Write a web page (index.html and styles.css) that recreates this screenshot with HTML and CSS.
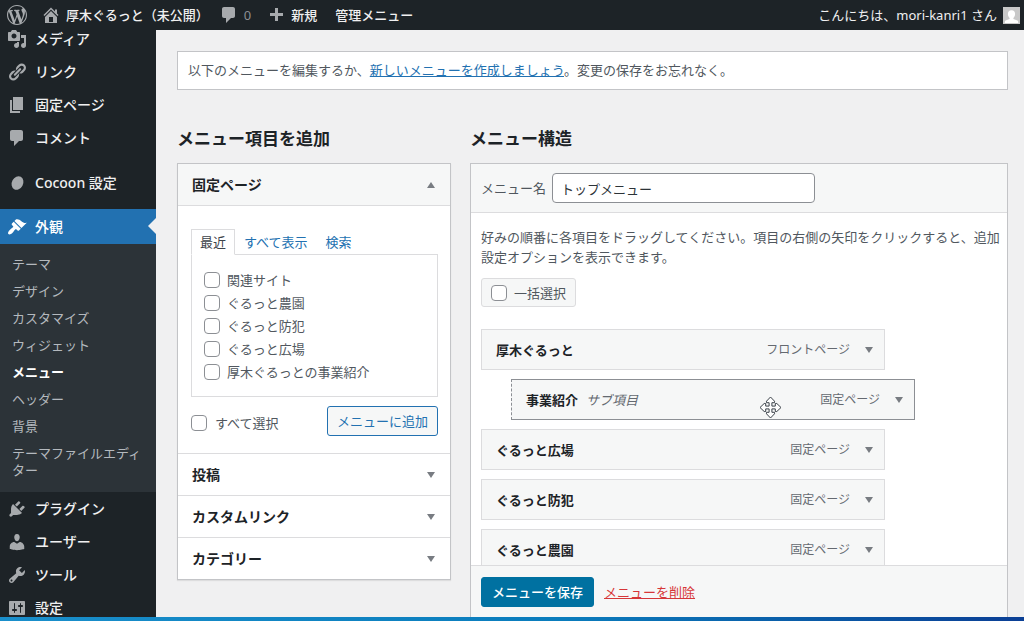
FILE: index.html
```html
<!DOCTYPE html>
<html lang="ja">
<head>
<meta charset="utf-8">
<meta name="viewport" content="width=device-width, initial-scale=1">
<title>メニュー</title>
<link rel="stylesheet" href="styles.css">
</head>
<body class="app">
<header class="adminbar">
  <a class="bar-logo" href="#" aria-label="WordPress"><svg class="icon" viewBox="0 0 20 20"><path d="M20 10c0-5.51-4.49-10-10-10C4.48 0 0 4.49 0 10c0 5.52 4.48 10 10 10 5.51 0 10-4.48 10-10zM7.78 15.37L4.37 6.22c.55-.02 1.17-.08 1.17-.08.5-.06.44-1.13-.06-1.11 0 0-1.45.11-2.37.11-.18 0-.37 0-.58-.01C4.12 2.69 6.87 1.11 10 1.11c2.33 0 4.45.87 6.05 2.34-.68-.11-1.65.39-1.65 1.58 0 .74.45 1.36.9 2.1.35.61.55 1.36.55 2.46 0 1.49-1.4 5-1.4 5l-3.03-8.37c.54-.02.82-.17.82-.17.5-.05.44-1.25-.06-1.22 0 0-1.44.12-2.38.12-.87 0-2.33-.12-2.33-.12-.5-.03-.56 1.2-.06 1.22l.92.08 1.26 3.41zM17.41 10c.24-.64.74-1.87.43-4.25.7 1.29 1.05 2.71 1.05 4.25 0 3.29-1.73 6.24-4.4 7.78.97-2.59 1.94-5.2 2.92-7.78zM6.1 18.09C3.12 16.65 1.11 13.53 1.11 10c0-1.3.23-2.48.72-3.59C3.25 10.3 4.67 14.2 6.1 18.09zm4.03-6.63l2.58 6.98c-.86.29-1.76.45-2.71.45-.79 0-1.57-.11-2.29-.33.81-2.38 1.62-4.74 2.42-7.1z"/></svg></a>
  <a class="bar-item bar-site" href="#"><svg class="icon" viewBox="0 0 20 20"><path d="M16 8.5l1.53 1.53-1.06 1.06L10 4.6l-6.47 6.49-1.06-1.06L10 2.5l4 4v-2h2v4zm-6-2.46l6 5.99V18H4v-5.97zM12 17v-5H8v5h4z"/></svg><span>厚木ぐるっと（未公開）</span></a>
  <a class="bar-item bar-comments" href="#"><svg class="icon" viewBox="0 0 20 20"><path d="M5 2h9c1.1 0 2 .9 2 2v7c0 1.1-.9 2-2 2h-2l-5 5v-5H5c-1.1 0-2-.9-2-2V4c0-1.1.9-2 2-2z"/></svg><span class="count">0</span></a>
  <a class="bar-item bar-new" href="#"><svg class="icon" viewBox="0 0 20 20"><path d="M17 8v3h-5v5H9v-5H4V8h5V3h3v5h5z"/></svg><span>新規</span></a>
  <a class="bar-item" href="#">管理メニュー</a>
  <a class="bar-item bar-user" href="#"><span>こんにちは、mori-kanri1 さん</span><svg class="avatar" viewBox="0 0 16 16"><path fill="#c8c8c8" d="M0 0h16v16H0z"/><path fill="#fff" d="M8 3c2.200 0 3.400 1.600 3.400 3.600 0 1.700-.8 3-1.600 3.700v.9l3.700 1.500c.5.200.8.700.8 1.300v1H1.700v-1c0-.6.300-1.100.8-1.300l3.700-1.500v-.9C5.400 9.600 4.600 8.300 4.600 6.600 4.600 4.600 5.800 3 8 3z"/></svg></a>
</header>
<div class="body">
  <nav class="sidebar" aria-label="管理メニュー">
    <ul class="nav">
      <li><a class="nav-link" href="#"><svg class="icon" viewBox="0 0 20 20"><path d="M13 11V4c0-.55-.45-1-1-1h-1.670L9 1H5L3.670 3H2c-.55 0-1 .45-1 1v7c0 .55.45 1 1 1h10c.55 0 1-.45 1-1zM7 4.500c1.380 0 2.500 1.120 2.500 2.500S8.380 9.500 7 9.500 4.500 8.380 4.500 7 5.620 4.500 7 4.500zM14 6h5v10.500c0 1.380-1.120 2.500-2.500 2.500S14 17.880 14 16.500s1.120-2.500 2.500-2.500c.17 0 .34.02.5.05V9h-3V6zm-4 8.050V13h2v3.500c0 1.380-1.120 2.500-2.500 2.500S7 17.880 7 16.500 8.120 14 9.500 14c.17 0 .34.02.5.05z"/></svg>メディア</a></li>
      <li><a class="nav-link" href="#"><svg class="icon" viewBox="0 0 20 20"><path d="M17.740 2.760c1.680 1.690 1.680 4.410 0 6.100l-1.530 1.520c-1.120 1.120-2.700 1.470-4.140 1.090l2.620-2.610.76-.77.76-.76c.84-.84.84-2.200 0-3.040-.84-.85-2.200-.85-3.040 0l-.77.76-3.380 3.380c-.37-1.440-.02-3.020 1.100-4.140l1.520-1.530c1.690-1.680 4.420-1.680 6.100 0zM8.590 13.430l5.340-5.340c.42-.42.42-1.100 0-1.520-.44-.43-1.130-.39-1.530 0l-5.330 5.340c-.42.42-.42 1.100 0 1.520.44.43 1.130.39 1.520 0zm-.76 2.290l4.140-4.150c.38 1.440.03 3.020-1.090 4.140l-1.520 1.530c-1.690 1.680-4.410 1.680-6.100 0-1.680-1.680-1.680-4.420 0-6.100l1.530-1.520c1.120-1.120 2.700-1.470 4.140-1.100l-4.140 4.150c-.85.84-.85 2.200 0 3.050.84.84 2.200.84 3.040 0z"/></svg>リンク</a></li>
      <li><a class="nav-link" href="#"><svg class="icon" viewBox="0 0 20 20"><path d="M6 15V2h10v13H6zm-1 1h8v2H3V5h2v11z"/></svg>固定ページ</a></li>
      <li><a class="nav-link" href="#"><svg class="icon" viewBox="0 0 20 20"><path d="M5 2h9c1.100 0 2 .9 2 2v7c0 1.100-.9 2-2 2h-2l-5 5v-5H5c-1.100 0-2-.9-2-2V4c0-1.100.9-2 2-2z"/></svg>コメント</a></li>
      <li class="nav-cocoon"><a class="nav-link" href="#"><svg class="icon" viewBox="0 0 20 20"><ellipse cx="10.500" cy="10" rx="5.600" ry="7" transform="rotate(28 10.500 10)"/></svg>Cocoon 設定</a></li>
      <li>
        <a class="nav-link nav-current" href="#"><svg class="icon" viewBox="0 0 20 20"><path d="M14.480 11.060L7.410 3.990l1.500-1.500c.5-.56 2.300-.47 3.510.32 1.210.8 1.430 1.280 2.910 2.100 1.180.64 2.450 1.260 4.450.85zm-.71.71L6.700 4.700 4.930 6.470c-.39.39-.39 1.020 0 1.410l1.060 1.060c.39.39.39 1.030 0 1.420-.6.6-1.430 1.110-2.210 1.690-.35.26-.7.53-1.010.84C1.430 14.230.4 16.080 1.400 17.070c.99 1 2.840-.03 4.180-1.360.31-.31.58-.66.85-1.020.57-.78 1.080-1.610 1.690-2.210.39-.39 1.020-.39 1.410 0l1.060 1.060c.39.39 1.020.39 1.410 0z"/></svg>外観</a>
        <ul class="subnav">
          <li><a href="#">テーマ</a></li>
          <li><a href="#">デザイン</a></li>
          <li><a href="#">カスタマイズ</a></li>
          <li><a href="#">ウィジェット</a></li>
          <li><a class="subnav-current" href="#" aria-current="page">メニュー</a></li>
          <li><a href="#">ヘッダー</a></li>
          <li><a href="#">背景</a></li>
          <li><a href="#">テーマファイルエディター</a></li>
        </ul>
      </li>
      <li><a class="nav-link" href="#"><svg class="icon" viewBox="0 0 20 20"><path d="M13.110 4.360L9.870 7.600 8 5.730l3.240-3.240c.35-.34 1.050-.2 1.560.32.52.51.66 1.210.31 1.550zm-8 1.770l.91-1.120 9.010 9.010-1.190.84c-.71.71-2.630 1.160-3.820 1.160H6.140L4.900 17.260c-.59.59-1.540.59-2.120 0-.59-.58-.59-1.530 0-2.120l1.240-1.240v-3.880c0-1.130.4-3.190 1.090-3.890zm7.260 3.970l3.240-3.240c.34-.35 1.040-.21 1.550.31.52.51.66 1.210.31 1.550l-3.240 3.250z"/></svg>プラグイン</a></li>
      <li><a class="nav-link" href="#"><svg class="icon" viewBox="0 0 20 20"><path d="M10 9.250c-2.270 0-2.730-3.440-2.730-3.440C7 4.020 7.820 2 9.970 2c2.160 0 2.980 2.020 2.710 3.810 0 0-.41 3.440-2.680 3.440zm0 2.570L12.720 10c2.390 0 4.520 2.330 4.520 4.530v2.490s-3.650 1.130-7.240 1.130c-3.650 0-7.240-1.130-7.240-1.130v-2.490c0-2.250 1.940-4.480 4.470-4.480z"/></svg>ユーザー</a></li>
      <li><a class="nav-link" href="#"><svg class="icon" viewBox="0 0 20 20"><path d="M16.680 9.770c-1.340 1.340-3.300 1.670-4.950.99l-5.410 6.520c-.99.99-2.590.99-3.580 0s-.99-2.590 0-3.570l6.520-5.420c-.68-1.650-.35-3.610.99-4.950 1.280-1.280 3.120-1.620 4.720-1.060l-2.890 2.890 2.820 2.820 2.860-2.870c.53 1.580.18 3.390-1.080 4.650zM3.810 16.210c.4.39 1.040.39 1.430 0 .4-.4.4-1.040 0-1.430-.39-.4-1.030-.4-1.430 0-.39.39-.39 1.030 0 1.430z"/></svg>ツール</a></li>
      <li><a class="nav-link" href="#"><svg class="icon" viewBox="0 0 20 20"><path d="M18 16V4c0-.55-.45-1-1-1H3c-.55 0-1 .45-1 1v12c0 .55.45 1 1 1h14c.55 0 1-.45 1-1zM8 11h1c.55 0 1 .45 1 1s-.45 1-1 1H8v1.500c0 .28-.22.5-.5.5s-.5-.22-.5-.5V13H6c-.55 0-1-.45-1-1s.45-1 1-1h1V5.500c0-.28.22-.5.5-.5s.5.22.5.5V11zm5-2h-1c-.55 0-1-.45-1-1s.45-1 1-1h1V5.500c0-.28.22-.5.5-.5s.5.22.5.5V7h1c.55 0 1 .45 1 1s-.45 1-1 1h-1v5.500c0 .28-.22.5-.5.5s-.5-.22-.5-.5V9z"/></svg>設定</a></li>
    </ul>
  </nav>
  <main class="main">
    <p class="notice">以下のメニューを編集するか、<a href="#">新しいメニューを作成しましょう</a>。変更の保存をお忘れなく。</p>
    <div class="columns">
      <section class="add-col">
        <h2 class="heading">メニュー項目を追加</h2>
        <div class="accordion">
          <button class="acc-head acc-open" type="button" aria-expanded="true">固定ページ<span class="arrow arrow-up"></span></button>
          <div class="acc-body">
            <div class="tabs" role="tablist">
              <button class="tab tab-active" type="button" role="tab" aria-selected="true">最近</button>
              <button class="tab" type="button" role="tab">すべて表示</button>
              <button class="tab" type="button" role="tab">検索</button>
            </div>
            <div class="tab-panel">
              <label class="check"><input type="checkbox">関連サイト</label>
              <label class="check"><input type="checkbox">ぐるっと農園</label>
              <label class="check"><input type="checkbox">ぐるっと防犯</label>
              <label class="check"><input type="checkbox">ぐるっと広場</label>
              <label class="check"><input type="checkbox">厚木ぐるっとの事業紹介</label>
            </div>
            <div class="add-row">
              <label class="check check-all"><input type="checkbox">すべて選択</label>
              <button class="btn btn-add" type="button">メニューに追加</button>
            </div>
          </div>
          <button class="acc-head" type="button">投稿<span class="arrow"></span></button>
          <button class="acc-head" type="button">カスタムリンク<span class="arrow"></span></button>
          <button class="acc-head" type="button">カテゴリー<span class="arrow"></span></button>
        </div>
      </section>
      <section class="edit-col">
        <h2 class="heading">メニュー構造</h2>
        <form class="editor">
          <div class="editor-head">
            <label for="menu-name">メニュー名</label>
            <input class="name-input" id="menu-name" type="text" value="トップメニュー">
          </div>
          <div class="editor-body">
            <p class="help">好みの順番に各項目をドラッグしてください。項目の右側の矢印をクリックすると、追加設定オプションを表示できます。</p>
            <label class="check bulk"><input type="checkbox">一括選択</label>
            <ul class="items">
              <li class="item"><span class="item-title">厚木ぐるっと</span><span class="item-type">フロントページ</span><button class="toggle" type="button" aria-label="開く"><span class="arrow"></span></button></li>
              <li class="item item-sub"><span class="item-title">事業紹介</span><em class="item-note">サブ項目</em><span class="item-type">固定ページ</span><button class="toggle" type="button" aria-label="開く"><span class="arrow"></span></button>
                <svg class="move" viewBox="0 0 23 23"><path d="M11.500 1l4 4.200v1.500h-2.600v3.400h3.400V7.500h1.500l4.200 4-4.200 4h-1.500v-2.600h-3.400v3.400h2.600v1.500l-4 4.200-4-4.200v-1.500h2.600v-3.400H6.700v2.600H5.200l-4.200-4 4.200-4h1.500v2.600h3.400V6.700H7.500V5.200z"/></svg>
              </li>
              <li class="item"><span class="item-title">ぐるっと広場</span><span class="item-type">固定ページ</span><button class="toggle" type="button" aria-label="開く"><span class="arrow"></span></button></li>
              <li class="item"><span class="item-title">ぐるっと防犯</span><span class="item-type">固定ページ</span><button class="toggle" type="button" aria-label="開く"><span class="arrow"></span></button></li>
              <li class="item"><span class="item-title">ぐるっと農園</span><span class="item-type">固定ページ</span><button class="toggle" type="button" aria-label="開く"><span class="arrow"></span></button></li>
            </ul>
          </div>
          <div class="editor-foot">
            <button class="btn btn-save" type="button">メニューを保存</button>
            <a class="delete" href="#">メニューを削除</a>
          </div>
        </form>
      </section>
    </div>
  </main>
</div>
<div class="taskbar"></div>
</body>
</html>
```

FILE: styles.css
```css
*, *::before, *::after { box-sizing: border-box; }
ul, p, h2 { margin: 0; padding: 0; }
ul { list-style: none; }
button, input { font: inherit; color: inherit; }
a { color: #2271b1; }

.app {
  display: flex;
  flex-direction: column;
  height: 100vh;
  margin: 0;
  overflow: hidden;
  background: #f0f0f1;
  color: #50575e;
  font: 13px/20px "Noto Sans", "Noto Sans CJK JP", sans-serif;
}
.icon { flex: none; width: 20px; height: 20px; fill: #a7aaad; }

/* Admin bar */
.adminbar {
  display: flex;
  flex: none;
  align-items: center;
  height: 30px;
  padding: 0 4px 0 7px;
  background: #1d2327;
  color: #f0f0f1;
  font-weight: 500;
}
.adminbar a { color: inherit; text-decoration: none; white-space: nowrap; }
.bar-logo { display: flex; margin-right: 14px; }
.bar-item { display: flex; align-items: center; gap: 5px; }
.bar-site { margin-right: 10px; }
.bar-comments { margin-right: 15px; }
.bar-new { margin-right: 18px; }
.count { color: #8c8f94; font-weight: 400; }
.bar-user { gap: 6px; margin-left: auto; font-weight: 400; }
.avatar { width: 17px; height: 17px; }

.body { display: flex; flex: 1; min-height: 0; }

/* Sidebar */
.sidebar { flex: none; width: 156px; overflow: hidden; background: #1d2327; }
.nav { margin-top: -8px; }
.nav-link {
  display: flex;
  align-items: center;
  gap: 8px;
  height: 33px;
  padding-left: 7px;
  color: #f0f0f1;
  font-size: 14px;
  font-weight: 500;
  text-decoration: none;
}
.nav-cocoon { margin: 12px 0 10px; }
.nav-current { position: relative; height: 35px; background: #2271b1; color: #fff; }
.nav-current .icon { fill: #fff; }
.nav-current::after {
  content: "";
  position: absolute;
  top: 9px;
  right: 0;
  border: 8px solid transparent;
  border-left: 0;
  border-right-color: #f0f0f1;
}
.subnav { padding: 7px 0 8px; background: #2c3338; }
.subnav a {
  display: block;
  padding: 5px 12px;
  color: #b4b9be;
  line-height: 17px;
  text-decoration: none;
}
.subnav .subnav-current { color: #fff; font-weight: 700; }

/* Content */
.main {
  display: flex;
  flex: 1;
  flex-direction: column;
  min-width: 0;
  padding: 21px 16px 0 21px;
}
.notice {
  flex: none;
  padding: 8px 10px 9px;
  border: 1px solid #c3c4c7;
  background: #fff;
}
.columns { display: flex; flex: 1; gap: 19px; min-height: 0; margin-top: 37px; }
.add-col { flex: none; width: 274px; }
.edit-col { display: flex; flex: 1; flex-direction: column; min-width: 0; }
.heading {
  margin-bottom: 12px;
  color: #1d2327;
  font-size: 17px;
  font-weight: 700;
  line-height: 24px;
}

.arrow {
  width: 0;
  height: 0;
  border: 4px solid transparent;
  border-top: 6px solid #787c82;
  border-bottom: 0;
}
.arrow-up { border-top: 0; border-bottom: 6px solid #787c82; }

.accordion { border: 1px solid #c3c4c7; background: #fff; box-shadow: 0 1px 1px rgba(0, 0, 0, .08); }
.acc-head {
  display: flex;
  align-items: center;
  justify-content: space-between;
  width: 100%;
  height: 42px;
  padding: 0 15px 0 14px;
  border: 0;
  border-top: 1px solid #dcdcde;
  background: #fff;
  color: #1d2327;
  font-size: 14px;
  font-weight: 700;
}
.acc-open { border-top: 0; border-bottom: 1px solid #dcdcde; background: #f6f7f7; }
.acc-body { padding: 23px 12px 17px 13px; }
.tabs { display: flex; }
.tab {
  height: 26px;
  padding: 0 8px;
  border: 1px solid transparent;
  background: none;
  color: #2271b1;
}
.tab-active {
  position: relative;
  margin-bottom: -1px;
  border-color: #dcdcde;
  border-bottom-color: #fff;
  background: #fff;
  color: #3c434a;
}
.tab-panel { margin-top: -1px; padding: 13px 12px; border: 1px solid #dcdcde; }
.check { display: flex; align-items: center; gap: 7px; height: 23px; }
.check input {
  flex: none;
  width: 16px;
  height: 16px;
  margin: 0;
  border: 1px solid #8c8f94;
  border-radius: 4px;
  background: #fff;
  appearance: none;
}
.add-row { display: flex; align-items: center; justify-content: space-between; margin-top: 9px; }
.check-all { gap: 8px; margin-top: 3px; }
.btn { height: 30px; border: 1px solid; border-radius: 3px; white-space: nowrap; }
.btn-add { padding: 0 9px; border-color: #2271b1; background: #f6f7f7; color: #2271b1; }

/* Menu editor */
.editor {
  display: flex;
  flex: 1;
  flex-direction: column;
  min-height: 0;
  border: 1px solid #c3c4c7;
  border-bottom: 0;
  background: #fff;
}
.editor-head {
  display: flex;
  flex: none;
  align-items: center;
  gap: 6px;
  padding: 9px 10px;
  border-bottom: 1px solid #dcdcde;
  background: #f6f7f7;
}
.name-input {
  width: 263px;
  height: 30px;
  padding: 0 8px;
  border: 1px solid #8c8f94;
  border-radius: 4px;
  background: #fff;
  color: #2c3338;
}
.editor-body { flex: 1; min-height: 0; padding: 14px 5px 0 10px; overflow: hidden; }
.bulk {
  width: max-content;
  height: 29px;
  margin: 11px 0 22px;
  padding: 0 9px;
  border: 1px solid #dcdcde;
  border-radius: 3px;
  background: #f6f7f7;
}
.items { display: flex; flex-direction: column; gap: 9px; }
.item {
  position: relative;
  display: flex;
  align-items: center;
  width: 404px;
  height: 41px;
  padding: 0 11px 0 14px;
  border: 1px solid #dcdcde;
  background: #f6f7f7;
}
.item-sub { margin-left: 30px; border-color: #8c8f94; border-left-style: dashed; }
.item-title { color: #1d2327; font-weight: 700; }
.item-note { margin-left: 8px; color: #646970; }
.item-type { margin-left: auto; color: #646970; font-size: 12px; }
.toggle { display: flex; margin-left: 15px; padding: 0; border: 0; background: none; }
.move {
  position: absolute;
  top: 16px;
  left: 247px;
  width: 23px;
  height: 23px;
  fill: #fff;
  stroke: #3c434a;
}
.editor-foot {
  display: flex;
  flex: none;
  align-items: center;
  gap: 10px;
  height: 52px;
  padding: 0 10px;
  border-top: 1px solid #dcdcde;
  background: #f6f7f7;
}
.btn-save { padding: 0 10px; border-color: #0071a1; background: #0071a1; color: #fff; font-weight: 500; }
.delete { color: #d63638; }

.taskbar { flex: none; height: 4px; background: linear-gradient(90deg, #1a8fcb, #0a7cbc 55%, #0b3f95); }
```
